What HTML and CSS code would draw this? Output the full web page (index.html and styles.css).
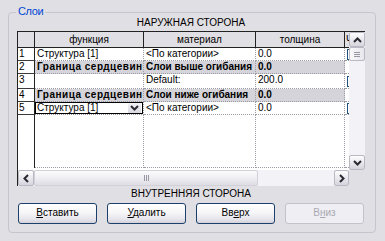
FILE: index.html
```html
<!DOCTYPE html>
<html lang="ru">
<head>
<meta charset="utf-8">
<title>Слои</title>
<link rel="stylesheet" href="styles.css">
</head>
<body>
<div class="group">
  <span class="legend">Слои</span>
  <div class="caption caption-top">НАРУЖНАЯ СТОРОНА</div>
  <div class="gridbox">
    <div class="gridmain">
      <div class="grid">
        <div class="h hn"></div>
        <div class="h">функция</div>
        <div class="h">материал</div>
        <div class="h">толщина</div>
        <div class="h hx">Ч</div>

        <div class="n">1</div>
        <div class="c">Структура [1]</div>
        <div class="c">&lt;По категории&gt;</div>
        <div class="c">0.0</div>
        <div class="x"><span class="chk"></span></div>

        <div class="n">2</div>
        <div class="c g g1">Граница сердцевины</div>
        <div class="c g">Слои выше огибания</div>
        <div class="c g">0.0</div>
        <div class="x"></div>

        <div class="n">3</div>
        <div class="c"></div>
        <div class="c">Default:</div>
        <div class="c">200.0</div>
        <div class="x"><span class="chk chk3"></span></div>

        <div class="n">4</div>
        <div class="c g g1">Граница сердцевины</div>
        <div class="c g">Слои ниже огибания</div>
        <div class="c g">0.0</div>
        <div class="x"></div>

        <div class="n">5</div>
        <div class="c cc">
          <div class="combo">
            <span class="combo-text">Структура [1]</span>
            <span class="drop"><svg width="9" height="6" viewBox="0 0 9 6"><path d="M1 1 L4.5 4.5 L8 1" fill="none" stroke="#2a2a33" stroke-width="2"/></svg></span>
          </div>
        </div>
        <div class="c">&lt;По категории&gt;</div>
        <div class="c">0.0</div>
        <div class="x"><span class="chk"></span></div>

        <div class="n nf"></div>
        <div class="c"></div>
        <div class="c"></div>
        <div class="c"></div>
        <div class="x"></div>
      </div>
      <div class="vscroll">
        <div class="sbtn vbtn"><svg width="9" height="6" viewBox="0 0 9 6"><path d="M1 5 L4.5 1.5 L8 5" fill="none" stroke="#2a2a33" stroke-width="2"/></svg></div>
        <div class="sbtn vthumb"><span class="grip-h"></span></div>
        <div class="vtrack"></div>
        <div class="sbtn vbtn"><svg width="9" height="6" viewBox="0 0 9 6"><path d="M1 1 L4.5 4.5 L8 1" fill="none" stroke="#2a2a33" stroke-width="2"/></svg></div>
      </div>
    </div>
    <div class="hrow">
      <div class="hscroll">
        <div class="sbtn hbtn hbtn-l"><svg width="6" height="9" viewBox="0 0 6 9"><path d="M5 1 L1.5 4.5 L5 8" fill="none" stroke="#2a2a33" stroke-width="2"/></svg></div>
        <div class="hthumb"><span class="grip-v"></span></div>
        <div class="htrack"></div>
        <div class="sbtn hbtn hbtn-r"><svg width="6" height="9" viewBox="0 0 6 9"><path d="M1 1 L4.5 4.5 L1 8" fill="none" stroke="#2a2a33" stroke-width="2"/></svg></div>
      </div>
      <div class="corner"></div>
    </div>
  </div>
  <div class="caption caption-bottom">ВНУТРЕННЯЯ СТОРОНА</div>
  <div class="buttons">
    <button class="btn"><u>В</u>ставить</button>
    <button class="btn"><u>У</u>далить</button>
    <button class="btn">Вв<u>е</u>рх</button>
    <button class="btn btn-disabled">В<u>н</u>из</button>
  </div>
</div>
</body>
</html>
```

FILE: styles.css
```css
* {
  box-sizing: border-box;
}

html,
body {
  margin: 0;
  padding: 0;
}

body {
  width: 385px;
  height: 241px;
  overflow: hidden;
  background: #e0dfe3;
  color: #000;
  font-family: "Liberation Sans", Arial, sans-serif;
  font-size: 10px;
}

.group {
  position: relative;
  width: 368px;
  height: 221px;
  margin: 12px 0 0 8px;
  padding: 3px 10px 0 8px;
  border: 1px solid #c6c5cd;
  border-radius: 4px;
}

.legend {
  position: absolute;
  top: -8px;
  left: 7px;
  padding: 0 2px;
  background: #e0dfe3;
  color: #0046d5;
  font-size: 11px;
  line-height: 13px;
  letter-spacing: -0.4px;
}

.caption {
  height: 13px;
  line-height: 13px;
  text-align: center;
  white-space: nowrap;
}

.caption-top {
  margin-bottom: 2px;
}

.caption-bottom {
  margin-top: 1px;
}

/* grid control */
.gridbox {
  width: 348px;
  height: 155px;
  display: flex;
  flex-direction: column;
  border-left: 1px solid #222;
  border-top: 1px solid #222;
  background: #fff;
}

.gridmain {
  display: flex;
  height: 138px;
}

.grid {
  width: 331px;
  height: 138px;
  display: grid;
  grid-template-columns: 17px 109px 112px 89px 4px;
  grid-template-rows: 16px 13px 13px 15px 13px 13px 53px;
  align-content: start;
  background: #fff;
  overflow: hidden;
}

.grid > div {
  overflow: hidden;
  white-space: nowrap;
}

.h {
  background: #e0dfe3;
  border-right: 1px solid #222;
  border-bottom: 1px solid #222;
  line-height: 15px;
  text-align: center;
}

.hx {
  border-right: 0;
  text-align: left;
  padding-left: 1px;
}

.n {
  padding-left: 1px;
  line-height: 12px;
  border-right: 1px solid #222;
  border-bottom: 1px solid #3a3a3a;
}

.nf {
  border-bottom: 0;
}

.c {
  padding-left: 2px;
  line-height: 12px;
  border-right: 1px dotted #9c9ba3;
  border-bottom: 1px dotted #9c9ba3;
}

.g {
  background: #d5d4da;
  font-weight: bold;
}

.g1 {
  letter-spacing: 0.5px;
}

.x {
  border-bottom: 1px dotted #9c9ba3;
}

.chk {
  display: block;
  width: 11px;
  height: 11px;
  margin: 1px 0 0 2px;
  border: 1px solid #1c5180;
  background: #fff;
}

.chk3 {
  margin-top: 2px;
}

.cc {
  padding-left: 0;
}

.combo {
  display: flex;
  align-items: center;
  width: 108px;
  height: 12px;
  border: 1px solid #000;
  padding-left: 1px;
  line-height: 10px;
}

.combo-text {
  flex: 1;
}

.drop {
  display: flex;
  align-items: center;
  justify-content: center;
  width: 13px;
  height: 10px;
  margin-right: 1px;
  background: linear-gradient(#f4f4f7, #d9d8e0);
  border-radius: 1px;
}

/* scrollbars */
.sbtn {
  display: flex;
  align-items: center;
  justify-content: center;
  border: 1px solid #b9b8c3;
  border-radius: 2px;
  background: linear-gradient(#fdfdfe, #e6e5eb 60%, #d6d5dd);
}

.vscroll {
  width: 16px;
  height: 138px;
  display: flex;
  flex-direction: column;
  background: #f1f0f4;
}

.vbtn {
  height: 15px;
}

.vthumb {
  height: 14px;
  background: linear-gradient(90deg, #f9f9fb, #e7e6ec);
}

.vtrack {
  flex: 1;
  background: #f3f2f6;
}

.grip-h {
  width: 6px;
  height: 5px;
  border-top: 1px solid #9897a3;
  border-bottom: 1px solid #9897a3;
  background: linear-gradient(transparent 1px, #9897a3 1px 2px, transparent 2px);
}

.hrow {
  display: flex;
  height: 16px;
}

.hscroll {
  width: 331px;
  height: 16px;
  display: flex;
  background: #f1f0f4;
}

.hbtn-l {
  width: 16px;
}

.hbtn-r {
  width: 15px;
}

.hthumb {
  width: 224px;
  display: flex;
  align-items: center;
  justify-content: center;
  border: 1px solid #d2d1d9;
  border-radius: 2px;
  background: linear-gradient(#fbfbfc, #f0eff3 45%, #dedde4);
}

.grip-v {
  width: 5px;
  height: 6px;
  border-left: 1px solid #9897a3;
  border-right: 1px solid #9897a3;
  background: linear-gradient(90deg, transparent 1px, #9897a3 1px 2px, transparent 2px);
}

.htrack {
  flex: 1;
  background: #f3f2f6;
}

.corner {
  width: 16px;
  background: #e0dfe3;
}

/* buttons */
.buttons {
  display: flex;
  gap: 10px;
  margin-top: 3px;
  padding-left: 1px;
}

.btn {
  width: 79px;
  height: 21px;
  padding: 0 0 1px;
  border: 1px solid #1f3f6b;
  border-radius: 3px;
  background: linear-gradient(#ffffff, #f6f6f8 45%, #e6e5eb 80%, #d3d2db);
  color: #000;
  font-family: "Liberation Sans", Arial, sans-serif;
  font-size: 10px;
  line-height: 18px;
  text-align: center;
}

.btn-disabled {
  border-color: #c3c2cb;
  background: #efeef2;
  color: #aaa9b3;
}
```
